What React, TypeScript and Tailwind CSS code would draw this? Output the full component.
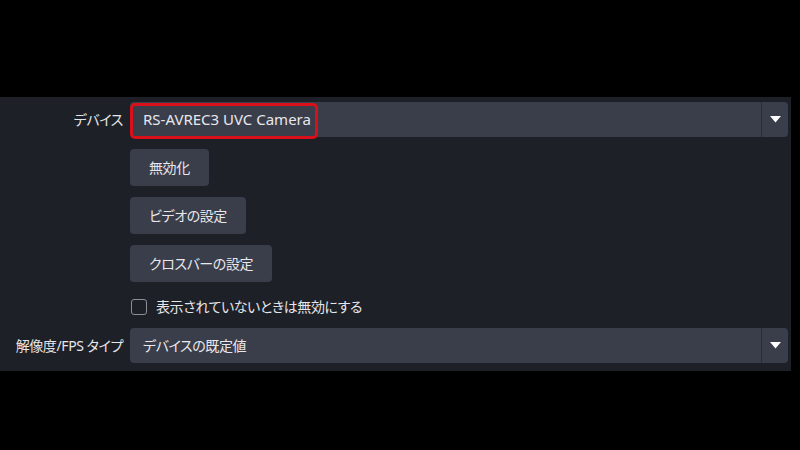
import React from "react";

const font = { fontFamily: '"Noto Sans", "Noto Sans CJK JP", sans-serif' };

function Combo({ text, highlight, jp }: { text: string; highlight?: boolean; jp?: boolean }) {
  return (
    <div className="relative flex h-[35px] flex-1 items-center rounded-[4px] bg-[#3a3d4a]">
      <div
        className={
          jp
            ? "flex-1 pl-[13px] text-[14px] tracking-[-0.4px] text-[#e8e8ec]"
            : "flex-1 pl-[13px] text-[15px] text-[#e8e8ec]"
        }
      >
        {text}
      </div>
      <div className="flex h-full w-[27px] items-center justify-center border-l border-[#2a2c36]">
        <svg width="11" height="7" viewBox="0 0 11 7">
          <path d="M0 0 L11 0 L5.5 6.5 Z" fill="#ffffff" />
        </svg>
      </div>
      {highlight && (
        <div className="absolute left-0 top-[1px] h-[36px] w-[188px] rounded-[5px] border-[3px] border-[#d9101a]" />
      )}
    </div>
  );
}

function Btn({ text }: { text: string }) {
  return (
    <div className="flex h-[37px] items-center rounded-[4px] bg-[#3a3d4a] px-[19px] text-[14px] tracking-[-0.4px] text-[#e8e8ec]">
      {text}
    </div>
  );
}

export default function App() {
  return (
    <div
      className="flex h-[450px] w-[800px] flex-col bg-black [font-feature-settings:'palt']"
      style={font}
    >
      <div className="h-[97px]" />
      <div className="mr-[9px] flex h-[274px] flex-col bg-[#1e2028] pt-[5px]">
        <div className="flex items-center">
          <div className="w-[123px] text-right text-[14px] tracking-[-0.4px] text-[#e6e6ea]">デバイス</div>
          <div className="ml-[7px] flex flex-1 pr-[3px]">
            <Combo text="RS-AVREC3 UVC Camera" highlight />
          </div>
        </div>
        <div className="ml-[130px] mt-[12px] flex flex-col items-start gap-[11px]">
          <Btn text="無効化" />
          <Btn text="ビデオの設定" />
          <Btn text="クロスバーの設定" />
        </div>
        <div className="ml-[131px] mt-[15px] flex h-[20px] items-center gap-[9px]">
          <div className="h-[16px] w-[16px] rounded-[3px] border-[1.5px] border-[#8d8f98]" />
          <div className="text-[14px] leading-[20px] tracking-[-0.4px] text-[#e6e6ea]">
            表示されていないときは無効にする
          </div>
        </div>
        <div className="mt-[11px] flex items-center">
          <div className="w-[123px] text-right text-[14px] tracking-[-0.4px] text-[#e6e6ea]">
            解像度/FPS タイプ
          </div>
          <div className="ml-[7px] flex flex-1 pr-[3px]">
            <Combo text="デバイスの既定値" jp />
          </div>
        </div>
      </div>
    </div>
  );
}
